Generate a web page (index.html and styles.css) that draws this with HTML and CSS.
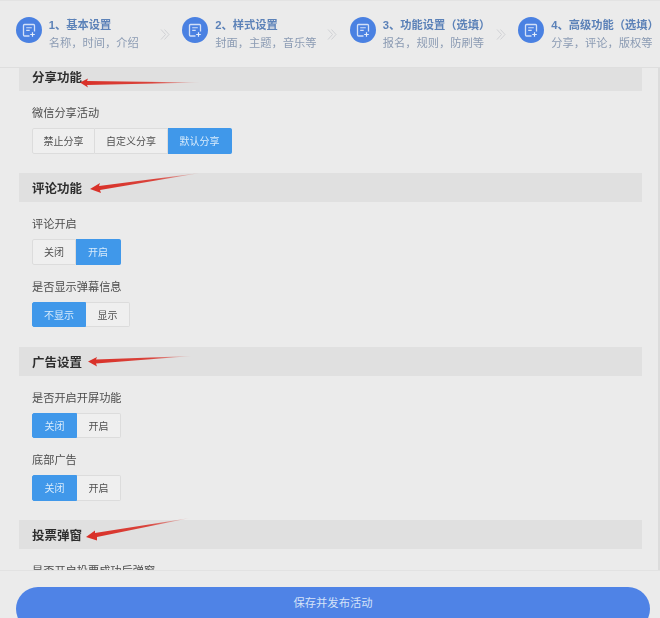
FILE: index.html
```html
<!DOCTYPE html>
<html lang="zh">
<head>
<meta charset="utf-8">
<title>高级功能</title>
<link rel="stylesheet" href="styles.css">
</head>
<body>
<div class="page">
  <svg class="defs" width="0" height="0" aria-hidden="true">
    <symbol id="step-glyph" viewBox="0 0 26 26">
      <circle cx="13" cy="13" r="13" fill="#4a81e2"/>
      <path d="M18.500 14.500V8.500a1 1 0 0 0-1-1H8.500a1 1 0 0 0-1 1v9.500a1 1 0 0 0 1 1h5" fill="none" stroke="#d3e0f7" stroke-width="1.300"/>
      <path d="M10.200 10.700h5.600M10.200 13.400h3.500" fill="none" stroke="#d3e0f7" stroke-width="1.100"/>
      <path d="M16.500 15.200v4.600M14.200 17.500h4.600" stroke="#e6eefb" stroke-width="1.200"/>
    </symbol>
    <symbol id="step-chev" viewBox="0 0 10 11">
      <path d="M1 .5l4.500 5-4.500 5M4.500 .5l4.500 5-4.500 5" fill="none" stroke="#cdcfd2" stroke-width=".9"/>
    </symbol>
  </svg>

  <header class="steps">
    <div class="step">
      <svg class="step-icon"><use href="#step-glyph"/></svg>
      <div class="step-text"><div class="step-title">1、基本设置</div><div class="step-sub">名称，时间，介绍</div></div>
      <svg class="chev"><use href="#step-chev"/></svg>
    </div>
    <div class="step">
      <svg class="step-icon"><use href="#step-glyph"/></svg>
      <div class="step-text"><div class="step-title">2、样式设置</div><div class="step-sub">封面，主题，音乐等</div></div>
      <svg class="chev"><use href="#step-chev"/></svg>
    </div>
    <div class="step">
      <svg class="step-icon"><use href="#step-glyph"/></svg>
      <div class="step-text"><div class="step-title">3、功能设置（选填）</div><div class="step-sub">报名，规则，防刷等</div></div>
      <svg class="chev"><use href="#step-chev"/></svg>
    </div>
    <div class="step">
      <svg class="step-icon"><use href="#step-glyph"/></svg>
      <div class="step-text"><div class="step-title">4、高级功能（选填）</div><div class="step-sub">分享，评论，版权等</div></div>
    </div>
  </header>

  <main class="content">
    <h2 class="bar bar-first">分享功能</h2>
    <div class="field">
      <div class="label">微信分享活动</div>
      <div class="group">
        <span class="opt w-63">禁止分享</span><span class="opt w-73">自定义分享</span><span class="opt on w-64">默认分享</span>
      </div>
    </div>

    <h2 class="bar">评论功能</h2>
    <div class="field">
      <div class="label">评论开启</div>
      <div class="group">
        <span class="opt w-44">关闭</span><span class="opt on w-45">开启</span>
      </div>
    </div>
    <div class="field">
      <div class="label">是否显示弹幕信息</div>
      <div class="group">
        <span class="opt on w-54">不显示</span><span class="opt w-44">显示</span>
      </div>
    </div>

    <h2 class="bar">广告设置</h2>
    <div class="field">
      <div class="label">是否开启开屏功能</div>
      <div class="group">
        <span class="opt on w-45">关闭</span><span class="opt w-44">开启</span>
      </div>
    </div>
    <div class="field">
      <div class="label">底部广告</div>
      <div class="group">
        <span class="opt on w-45">关闭</span><span class="opt w-44">开启</span>
      </div>
    </div>

    <h2 class="bar">投票弹窗</h2>
    <div class="field">
      <div class="label">是否开启投票成功后弹窗</div>
    </div>
  </main>

  <footer class="foot">
    <button class="save" type="button">保存并发布活动</button>
  </footer>

  <svg class="arrows" viewBox="0 0 660 618">
    <defs>
      <linearGradient id="fade" x1="0" y1="0" x2="1" y2="0">
        <stop offset="0" stop-color="#d92f27"/>
        <stop offset=".6" stop-color="#d9443c"/>
        <stop offset="1" stop-color="#d9443c" stop-opacity=".1"/>
      </linearGradient>
    </defs>
    <path fill="url(#fade)" d="M80 82.500L88 78.500L87 81L200 82.500L87 85L88 87.500Z"/>
    <path fill="url(#fade)" d="M90 189L100 183L99 186L200 173L100 190L101 193Z"/>
    <path fill="url(#fade)" d="M88 361.500L97 357L96 359.500L192 356L96 363.500L97 366.500Z"/>
    <path fill="url(#fade)" d="M86 537L95 530.500L95 533L190 518L97 537L97 540.500Z"/>
  </svg>
</div>
</body>
</html>
```
FILE: styles.css
```css
* { box-sizing: border-box; }
html, body { margin: 0; padding: 0; }
body {
  width: 660px;
  height: 618px;
  overflow: hidden;
  background: #ebebeb;
  font-family: "Liberation Sans", "Noto Sans CJK SC", sans-serif;
}
.page {
  position: relative;
  width: 660px;
  height: 618px;
  display: flex;
  flex-direction: column;
  filter: blur(0.35px);
}
.defs { position: absolute; }
.steps {
  flex: none;
  height: 68px;
  padding: 16px 0 0 15.700px;
  display: grid;
  grid-template-columns: 166.500px 167.500px 168.500px 167px;
  border-top: 1px solid #e3e3e3;
  border-bottom: 1px solid #dedede;
}
.step {
  display: flex;
  align-items: flex-start;
  min-width: 0;
}
.step-icon { flex: none; width: 26px; height: 26px; }
.step-text { margin: 1px 0 0 7px; white-space: nowrap; }
.step-title {
  font-size: 11.250px;
  line-height: 15px;
  font-weight: 700;
  color: #5c82b8;
}
.step-sub {
  margin-top: 3px;
  font-size: 11.250px;
  line-height: 15px;
  color: #8b9bb3;
}
.chev {
  flex: none;
  width: 10px;
  height: 11px;
  margin-left: auto;
  margin-right: 12.500px;
  margin-top: 11.500px;
}
.content {
  flex: 1;
  min-height: 0;
  overflow: hidden;
  padding: 0 16px 0 19px;
  border-right: 2px solid #dcdcdc;
}
.bar {
  margin: 19.500px 0 0;
  height: 29px;
  padding-left: 13px;
  display: flex;
  align-items: center;
  background: #e0e0e0;
  font-size: 12.500px;
  font-weight: 700;
  color: #2e2e2e;
}
.bar-first { height: 23px; margin-top: 0; padding-bottom: 7px; }
.field { padding: 15px 0 0 13px; }
.label {
  font-size: 11.200px;
  line-height: 15px;
  color: #4c4c4c;
  margin-bottom: 7px;
}
.group { display: flex; height: 25.500px; }
.opt {
  display: flex;
  align-items: center;
  justify-content: center;
  height: 100%;
  font-size: 10px;
  color: #505050;
  background: #efefef;
  border: 1px solid #dcdcdc;
}
.opt + .opt { border-left: 0; }
.opt:first-child { border-radius: 2px 0 0 2px; }
.opt:last-child { border-radius: 0 2px 2px 0; }
.opt.on { background: #4098ea; border-color: #4098ea; color: #d8ebfb; }
.w-44 { width: 44px; }
.w-45 { width: 45px; }
.w-54 { width: 54px; }
.w-63 { width: 63px; }
.w-64 { width: 64px; }
.w-73 { width: 73px; }
.foot {
  flex: none;
  height: 48px;
  padding: 16px 10px 0 16px;
  border-top: 1px solid #e2e2e2;
  overflow: hidden;
}
.save {
  display: block;
  width: 634px;
  height: 44px;
  border: 0;
  border-radius: 22px;
  background: #4f83e6;
  color: #d5e2f8;
  font: inherit;
  font-size: 11.300px;
  padding: 0 0 14px;
}
.arrows {
  position: absolute;
  left: 0;
  top: 0;
  width: 660px;
  height: 618px;
  pointer-events: none;
}
```
